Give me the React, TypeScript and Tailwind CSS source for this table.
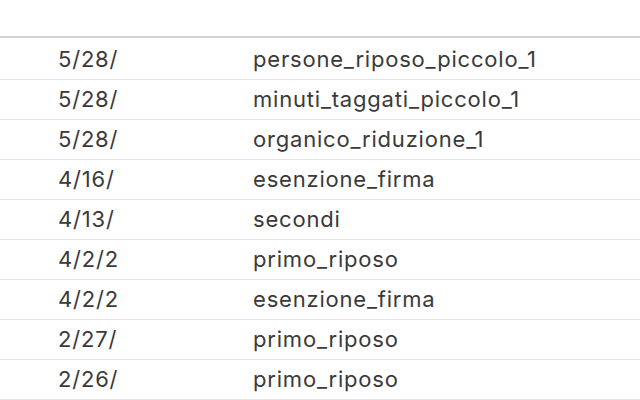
const rows: [string, string][] = [
  ["5/28/", "persone_riposo_piccolo_1"],
  ["5/28/", "minuti_taggati_piccolo_1"],
  ["5/28/", "organico_riduzione_1"],
  ["4/16/", "esenzione_firma"],
  ["4/13/", "secondi"],
  ["4/2/2", "primo_riposo"],
  ["4/2/2", "esenzione_firma"],
  ["2/27/", "primo_riposo"],
  ["2/26/", "primo_riposo"],
]

export default function App() {
  return (
    <div className="w-[640px] h-[400px] overflow-hidden bg-white font-['Inter',sans-serif] text-[22px] tracking-[0.8px] text-[#3a3a3a]">
      {/* шапка таблицы пустая */}
      <div className="h-[38px] border-b-2 border-[#d4d4d4]" />
      <div className="pt-[2px]">
        {rows.map(([date, name], i) => (
          <div key={i} className="flex items-center h-10 border-b border-[#e6e6e6]">
            <div className="w-[253px] pl-[58px] overflow-hidden whitespace-nowrap">{date}</div>
            <div className="whitespace-nowrap">{name}</div>
          </div>
        ))}
      </div>
    </div>
  )
}
